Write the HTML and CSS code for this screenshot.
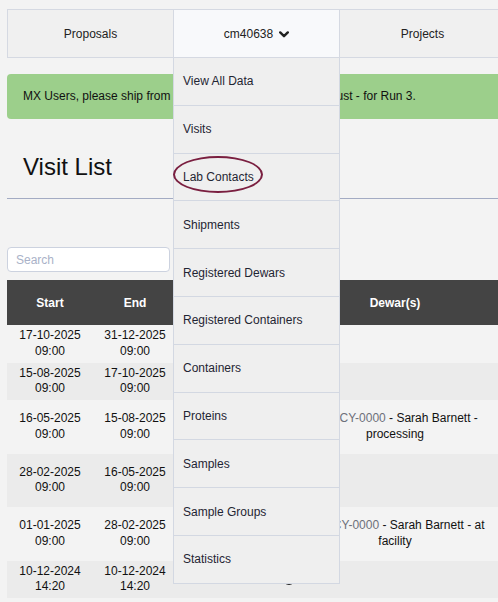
FILE: index.html
```html
<!DOCTYPE html>
<html lang="en">
<head>
  <meta charset="UTF-8">
  <meta name="viewport" content="width=device-width, initial-scale=1.0">
  <title>Visit List</title>
  <link rel="stylesheet" href="styles.css">
</head>
<body>

  <div class="page">

    <!-- top navigation -->
    <nav class="main-nav">
      <a class="nav-item" href="#">Proposals</a>
      <div class="nav-item nav-item-open">
        <span>cm40638</span>
        <svg class="chevron" width="10" height="7" viewBox="0 0 10 7">
          <polyline points="1.2,1.4 5,5.2 8.8,1.4" fill="none" stroke="#222" stroke-width="2.4" stroke-linecap="round" stroke-linejoin="round"/>
        </svg>

        <!-- proposal menu -->
        <ul class="dropdown">
          <li><a href="#">View All Data</a></li>
          <li><a href="#">Visits</a></li>
          <li class="marked"><a href="#">Lab Contacts</a></li>
          <li><a href="#">Shipments</a></li>
          <li><a href="#">Registered Dewars</a></li>
          <li><a href="#">Registered Containers</a></li>
          <li><a href="#">Containers</a></li>
          <li><a href="#">Proteins</a></li>
          <li><a href="#">Samples</a></li>
          <li><a href="#">Sample Groups</a></li>
          <li><a href="#">Statistics</a></li>
        </ul>
      </div>
      <a class="nav-item" href="#">Projects</a>
    </nav>

    <div class="notice">MX Users, please ship from Monday 28th July until 1st August - for Run 3.</div>

    <h1 class="page-title">Visit List</h1>
    <hr class="divider">

    <input class="search" type="text" placeholder="Search">

    <!-- visits -->
    <table class="visits">
      <colgroup>
        <col class="col-start">
        <col class="col-end">
        <col class="col-beamline">
        <col class="col-state">
        <col class="col-dewars">
        <col class="col-extra">
      </colgroup>
      <thead>
        <tr>
          <th>Start</th>
          <th>End</th>
          <th></th>
          <th></th>
          <th>Dewar(s)</th>
          <th></th>
        </tr>
      </thead>
      <tbody>
        <tr>
          <td>17-10-2025<br>09:00</td>
          <td>31-12-2025<br>09:00</td>
          <td></td>
          <td></td>
          <td></td>
          <td></td>
        </tr>
        <tr>
          <td>15-08-2025<br>09:00</td>
          <td>17-10-2025<br>09:00</td>
          <td></td>
          <td></td>
          <td></td>
          <td></td>
        </tr>
        <tr class="tall">
          <td>16-05-2025<br>09:00</td>
          <td>15-08-2025<br>09:00</td>
          <td></td>
          <td></td>
          <td><a class="dewar-code" href="#">DLS-CY-0000</a> - Sarah Barnett - processing</td>
          <td></td>
        </tr>
        <tr class="tall">
          <td>28-02-2025<br>09:00</td>
          <td>16-05-2025<br>09:00</td>
          <td></td>
          <td></td>
          <td></td>
          <td></td>
        </tr>
        <tr class="tall">
          <td>01-01-2025<br>09:00</td>
          <td>28-02-2025<br>09:00</td>
          <td></td>
          <td></td>
          <td><a class="dewar-code" href="#">DLS-CY-0000</a> - Sarah Barnett - at facility</td>
          <td></td>
        </tr>
        <tr>
          <td>10-12-2024<br>14:20</td>
          <td>10-12-2024<br>14:20</td>
          <td></td>
          <td><span class="state-dot"></span></td>
          <td></td>
          <td></td>
        </tr>
      </tbody>
    </table>

  </div>

</body>
</html>
```

FILE: styles.css
```css
/* ===== General ===== */
html, body {
  overflow: hidden;
}

body {
  margin: 0;
  background-color: #f3f3f3;
  font-family: "Liberation Sans", Arial, sans-serif;
  font-size: 12px;
  color: #222;
}

.page {
  width: 520px;
  padding: 9px 0 0 7px;
}

/* ===== Navigation ===== */
.main-nav {
  display: flex;
  border-top: 1px solid #d5d9e2;
  border-bottom: 1px solid #d5d9e2;
  border-left: 1px solid #d5d9e2;
  background-color: #f0f0f0;
}

.nav-item {
  position: relative;
  box-sizing: border-box;
  width: 166px;
  height: 47px;
  border-right: 1px solid #d5d9e2;
  display: flex;
  align-items: center;
  justify-content: center;
  color: #222;
  text-decoration: none;
}

.nav-item-open {
  background-color: #f8f9fb;
}

.chevron {
  margin-left: 6px;
  margin-top: 2px;
}

.dropdown {
  position: absolute;
  top: calc(100% + 1px);
  left: -1px;
  z-index: 10;
  box-sizing: border-box;
  width: 167px;
  margin: 0;
  padding: 0;
  list-style: none;
  background-color: #efefef;
  border: 1px solid #d3d8e2;
  border-top: none;
}

.dropdown li {
  position: relative;
  height: 46.8px;
  display: flex;
  align-items: center;
  padding-left: 9px;
  border-top: 1px solid #d3d8e2;
}

.dropdown li:first-child {
  border-top: none;
}

.dropdown a {
  color: #1f2533;
  text-decoration: none;
}

.dropdown .marked::after {
  content: "";
  position: absolute;
  left: -1px;
  top: 2.4px;
  box-sizing: border-box;
  width: 90px;
  height: 37px;
  border: 2.5px solid #7a1f40;
  border-radius: 50%;
}

/* ===== Notice ===== */
.notice {
  margin-top: 16px;
  height: 45px;
  line-height: 45px;
  padding-left: 16px;
  background-color: #9ccf8b;
  border-radius: 4px 0 0 4px;
  color: #111;
  white-space: nowrap;
}

/* ===== Title ===== */
.page-title {
  margin: 34px 0 0;
  padding-left: 16px;
  font-size: 24px;
  line-height: 28px;
  font-weight: normal;
  color: #111;
}

.divider {
  margin: 17px 0 0;
  height: 0;
  border: none;
  border-top: 1px solid #a3abc3;
}

/* ===== Search ===== */
.search {
  display: block;
  box-sizing: border-box;
  width: 163px;
  height: 25px;
  margin-top: 48px;
  padding: 0 8px;
  border: 1px solid #ccd2df;
  border-radius: 4px;
  background-color: #fff;
  font-family: "Liberation Sans", Arial, sans-serif;
  font-size: 12px;
}

.search::placeholder {
  color: #a9b2c8;
}

/* ===== Visits table ===== */
.visits {
  margin-top: 8px;
  width: 513px;
  table-layout: fixed;
  border-collapse: collapse;
}

.col-start { width: 86px; }
.col-end { width: 84px; }
.col-beamline { width: 101px; }
.col-state { width: 22px; }
.col-dewars { width: 190px; }
.col-extra { width: 30px; }

.visits th {
  height: 45px;
  padding: 0;
  background-color: #444;
  color: #fff;
  font-weight: bold;
  text-align: center;
}

.visits td {
  padding: 3px 0;
  line-height: 15.6px;
  text-align: center;
  vertical-align: middle;
  color: #111;
}

.visits tbody tr {
  height: 37.5px;
}

.visits tbody tr.tall {
  height: 53.5px;
}

.visits tbody tr:nth-child(even) {
  background-color: #ebebeb;
}

.dewar-code {
  color: #6d707a;
  text-decoration: none;
}

.state-dot {
  display: inline-block;
  width: 12px;
  height: 12px;
  border-radius: 50%;
  background-color: #222;
  vertical-align: middle;
}
```
